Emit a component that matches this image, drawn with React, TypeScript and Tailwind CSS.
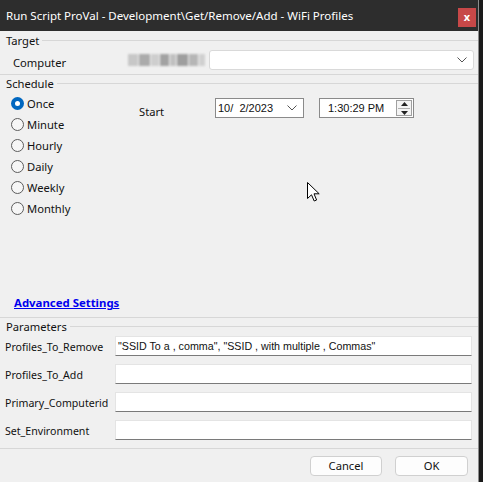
import React from 'react';

const scheduleOptions = ['Once', 'Minute', 'Hourly', 'Daily', 'Weekly', 'Monthly'];

const parameters = [
    { name: 'Profiles_To_Remove', value: '"SSID To a , comma", "SSID , with multiple , Commas"' },
    { name: 'Profiles_To_Add', value: '' },
    { name: 'Primary_Computerid', value: '' },
    { name: 'Set_Environment', value: '' },
];

function GroupHeader({ label }: { label: string }) {
    return (
        <div className="flex items-center h-[17px] pl-[6px]">
            <span className="leading-none">{label}</span>
            <div className="flex-1 ml-[3px] h-px bg-[#d7d7d7]" />
        </div>
    );
}

function Separator() {
    return <div className="h-px bg-[#d7d7d7] shrink-0" />;
}

function Chevron() {
    return (
        <svg width="10" height="6" viewBox="0 0 10 6" fill="none">
            <path d="M0.5 0.5 L5 5 L9.5 0.5" stroke="#555" strokeWidth="1" />
        </svg>
    );
}

export default function App() {
    return (
        <div className="w-[483px] h-[482px] bg-[#1a1a1a] flex font-['Noto_Sans',sans-serif] text-[11.2px] text-[#111]">
            <div className="w-[479px] h-full bg-[#f0f0f0] flex flex-col border-r border-[#8c8c8c]">
                {/* Title bar */}
                <div className="h-[31px] shrink-0 bg-[#2d2d2d] flex items-start justify-between pl-[6px] pr-[2px]">
                    <span className="text-white text-[11.5px] mt-[7px] leading-[18px]">
                        Run Script ProVal - Development\Get/Remove/Add - WiFi Profiles
                    </span>
                    <div className="mt-[8px] w-[18px] h-[19px] bg-[#c74848] flex items-center justify-center text-white text-[11px] font-bold leading-none pb-[2px]">
                        x
                    </div>
                </div>

                {/* Target */}
                <div className="pt-[1px]">
                    <GroupHeader label="Target" />
                </div>
                <div className="h-[25px] flex items-start pt-[1px]">
                    <span className="ml-[13px] w-[115px] mt-[6px] leading-[14px]">Computer</span>
                    <div className="mt-[4px] w-[77px] h-[12px] flex gap-[1px] blur-[1px] opacity-80">
                        <div className="w-[10px] bg-[#bdbdbd]" />
                        <div className="w-[12px] bg-[#9a9a9a]" />
                        <div className="w-[8px] bg-[#c6c6c6]" />
                        <div className="w-[9px] bg-[#8f8f8f]" />
                        <div className="w-[6px] bg-[#b5b5b5]" />
                        <div className="w-[12px] bg-[#8a8a8a]" />
                        <div className="w-[9px] bg-[#a8a8a8]" />
                        <div className="w-[6px] bg-[#c9c9c9]" />
                    </div>
                    <div className="ml-[4px] w-[265px] h-[20px] bg-white border border-[#d9d9d9] rounded-[3px] flex items-center justify-end pr-[6px]">
                        <Chevron />
                    </div>
                </div>
                <Separator />

                {/* Schedule */}
                <GroupHeader label="Schedule" />
                <div className="relative h-[225px] flex flex-col">
                    <div className="flex pt-[1px]">
                        <div className="flex flex-col pl-[11px] w-[139px]">
                            {scheduleOptions.map((opt, i) => (
                                <div key={opt} className="h-[21px] flex items-center gap-[3px]">
                                    {i === 0 ? (
                                        <div className="w-[13px] h-[13px] rounded-full bg-[#0067c0] flex items-center justify-center">
                                            <div className="w-[5px] h-[5px] rounded-full bg-white" />
                                        </div>
                                    ) : (
                                        <div className="w-[13px] h-[13px] rounded-full border border-[#5c5c5c] bg-[#f6f6f6]" />
                                    )}
                                    <span className="leading-none">{opt}</span>
                                </div>
                            ))}
                        </div>
                        <div className="flex items-start pt-[5px]">
                            <span className="mt-[8px] w-[76px] leading-none">Start</span>
                            <div className="w-[89px] h-[20px] bg-white border border-[#8a8a8a] flex items-center justify-between pl-[2px] pr-[6px] font-['Liberation_Sans',sans-serif] text-[11px]">
                                <span>10/&nbsp;&nbsp;2/2023</span>
                                <Chevron />
                            </div>
                            <div className="ml-[15px] w-[95px] h-[20px] bg-white border border-[#8a8a8a] flex items-center justify-between pl-[8px] pr-[1px] font-['Liberation_Sans',sans-serif] text-[11px]">
                                <span>1:30:29 PM</span>
                                <div className="w-[16px] h-[16px] border border-[#a0a0a0] bg-[#f4f4f4] flex flex-col items-center justify-center gap-[2px]">
                                    <svg width="7" height="4" viewBox="0 0 7 4"><path d="M0 4 L3.5 0 L7 4 Z" fill="#222" /></svg>
                                    <div className="w-[12px] h-px bg-[#b0b0b0]" />
                                    <svg width="7" height="4" viewBox="0 0 7 4"><path d="M0 0 L3.5 4 L7 0 Z" fill="#222" /></svg>
                                </div>
                            </div>
                        </div>
                    </div>

                    {/* mouse pointer */}
                    <svg className="absolute left-[307px] top-[90px]" width="13" height="20" viewBox="0 0 13 20">
                        <path d="M0.5 0.5 L0.5 16.5 L4.5 12.8 L7.2 19 L9.6 18 L7 11.8 L12.2 11.8 Z" fill="#fff" stroke="#000" strokeWidth="1" strokeLinejoin="round" />
                    </svg>

                    <div className="mt-auto mb-[5px] pl-[14px]">
                        <span className="font-bold text-[11.4px] text-[#0000ee] underline leading-none">Advanced Settings</span>
                    </div>
                </div>
                <Separator />

                {/* Parameters */}
                <GroupHeader label="Parameters" />
                <div className="flex flex-col pt-[1px]">
                    {parameters.map((p) => (
                        <div key={p.name} className="h-[28px] flex items-start">
                            <span className="w-[115px] pl-[5px] mt-[4px] leading-[14px] text-[10.6px] whitespace-nowrap">{p.name}</span>
                            <div className="w-[357px] h-[20px] bg-white border border-[#e4e4e4] border-b-[#7a7a7a] flex items-center pl-[2px] font-['Liberation_Sans',sans-serif] text-[10.7px] text-[#111]">
                                {p.value}
                            </div>
                        </div>
                    ))}
                </div>
                <Separator />

                {/* Buttons */}
                <div className="flex justify-end gap-[13px] pt-[7px] pr-[10px]">
                    <button className="w-[72px] h-[20px] bg-[#fdfdfd] border border-[#d0d0d0] rounded-[4px] flex items-center justify-center leading-none">
                        Cancel
                    </button>
                    <button className="w-[73px] h-[20px] bg-[#fdfdfd] border border-[#d0d0d0] rounded-[4px] flex items-center justify-center leading-none">
                        OK
                    </button>
                </div>
            </div>
        </div>
    );
}
